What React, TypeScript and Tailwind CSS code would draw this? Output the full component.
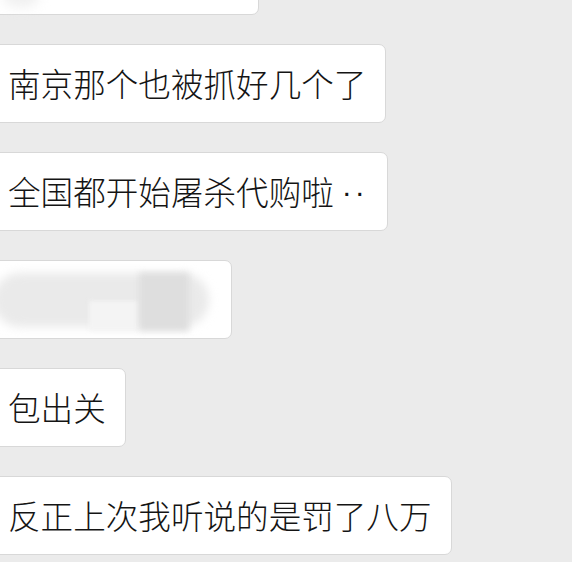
import React from "react";

const Bubble = ({ children, className = "" }: { children?: React.ReactNode; className?: string }) => (
  <div
    className={
      "ml-[-12px] self-start h-[79px] shrink-0 bg-white border border-[#d8d8d8] rounded-[7px] flex items-center pl-[19px] pr-[19px] text-[32.6px] leading-none text-[#141414] font-light whitespace-nowrap " +
      className
    }
  >
    {children}
  </div>
);

export default function App() {
  return (
    <div
      className="w-[572px] h-[562px] overflow-hidden bg-[#ebebeb] flex flex-col gap-[29px]"
      style={{ fontFamily: '"Noto Sans CJK SC", "Noto Sans", sans-serif' }}
    >
      <Bubble className="w-[271px] mt-[-64px] relative">
        <div className="absolute left-[14px] top-[44px] w-[36px] h-[26px] rounded-full bg-[#f0f0f0] blur-[6px]" />
      </Bubble>
      <Bubble>南京那个也被抓好几个了</Bubble>
      <Bubble className="w-[400px]">
        全国都开始屠杀代购啦
        <span
          className="inline-block pl-[8px] text-[30px] tracking-[3px]"
          style={{ fontFamily: '"Liberation Sans", sans-serif' }}
        >
          ··
        </span>
      </Bubble>
      <Bubble className="w-[244px] relative overflow-hidden">
        <div className="absolute left-[4px] top-[12px] w-[216px] h-[54px] rounded-full bg-[#eaeaea] blur-[5px]" />
        <div className="absolute left-[100px] top-[40px] w-[50px] h-[30px] bg-[#f4f4f4] blur-[2px]" />
        <div className="absolute left-[150px] top-[12px] w-[50px] h-[58px] bg-[#dedede] blur-[3px]" />
      </Bubble>
      <Bubble>包出关</Bubble>
      <Bubble>反正上次我听说的是罚了八万</Bubble>
    </div>
  );
}
